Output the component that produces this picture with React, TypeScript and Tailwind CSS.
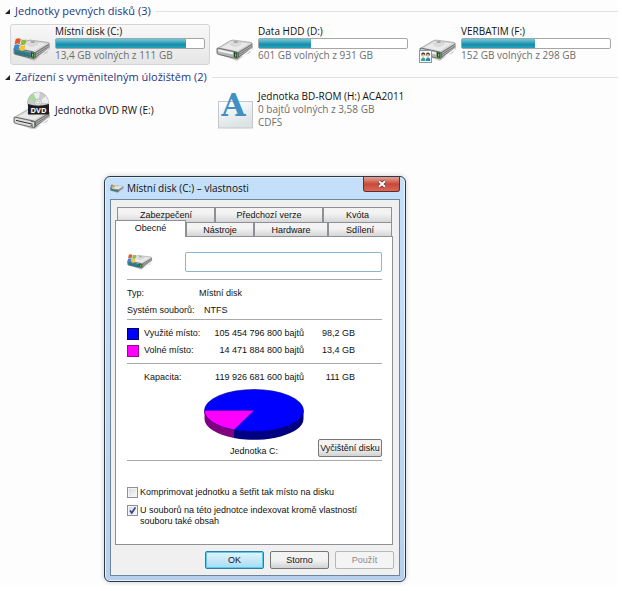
import { useState } from "react";
import type { ReactNode } from "react";
import clsx from "clsx";

type DriveKind = "system" | "plain" | "shared";

const drives: { name: string; info: string; used: number; kind: DriveKind; selected?: boolean }[] = [
  { name: "Místní disk (C:)", info: "13,4 GB volných z 111 GB", used: 88, kind: "system", selected: true },
  { name: "Data HDD (D:)", info: "601 GB volných z 931 GB", used: 35, kind: "plain" },
  { name: "VERBATIM (F:)", info: "152 GB volných z 298 GB", used: 49, kind: "shared" },
];

const backTabs = ["Zabezpečení", "Předchozí verze", "Kvóta"];
const frontTabs = ["Obecné", "Nástroje", "Hardware", "Sdílení"];

function DriveBody() {
  return (
    <g>
      <path d="M2 20 L21 27 L37 15 L37 13 L34 19 L20 25Z" fill="#9a9a9a" opacity="0.5" />
      <path d="M1.2 14.5 L14.5 6.6 Q16 6 18 6.2 L35 8.4 Q36.6 8.8 36 10 L21 19.4 L2 16Z" fill="#d4d4d4" stroke="#8b8b8b" strokeWidth="0.6" />
      <path d="M5 13.6 L16 7.4 L33 9.4 L21 17Z" fill="#e9e9e9" />
      <path d="M14 9.6 Q20 6.8 25 8.6 Q26 11 20 12.4 Q15 12.6 14 9.6Z" fill="#dadada" stroke="#c4c4c4" strokeWidth="0.4" />
      <path d="M18 7.2 L22 7.6 L21 9 L17.5 8.4Z" fill="#999" />
      <path d="M21 18.8 L36.4 9.4 L36.6 13.6 L22 24.6 L20.4 24Z" fill="#767676" />
      <path d="M23 19.4 L36 11.4 M23 21.6 L36.2 13.2" stroke="#c4c4c4" strokeWidth="0.8" />
      <path d="M1 14.6 Q1 14 2.4 14.2 L20.6 18 Q22 18.4 22 19.4 L22 23.6 Q22 25 20.4 24.6 L2.4 20.4 Q1 20 1 19Z" fill="#b4b4b4" stroke="#555" strokeWidth="0.8" />
      <path d="M2.4 15.2 L17 18.4 L17 20.6 L2.4 17.4Z" fill="#f1f1f1" />
      <path d="M17.8 18 L21.2 18.8 L21.2 24 L17.8 23.2Z" fill="#1f4a1f" />
      <path d="M19 19.4 L20.3 19.7 L20.3 22.8 L19 22.5Z" fill="#55d04c" />
    </g>
  );
}

function WindowsFlag() {
  return (
    <g>
      <path d="M1.6 14.8 L17.6 18.4 L17.6 23.6 L2.4 20 L1.6 19Z" fill="#176a78" opacity="0.85" />
      <path d="M2.6 5.2 Q5 3.4 7.8 5 L6.8 10 Q4.2 8.8 1.6 10.4Z" fill="#dd5a2c" />
      <path d="M8.6 5.2 Q11 6.6 13.6 5.2 L12.6 10.2 Q10 11.6 7.6 10.4Z" fill="#86bd48" />
      <path d="M1.4 11.2 Q4 9.6 6.6 10.9 L5.6 15.6 Q3 14.4 0.6 16Z" fill="#3c88cf" />
      <path d="M7.4 11.2 Q10 12.6 12.4 11.1 L11.4 15.9 Q9 17.4 6.4 16Z" fill="#f4c637" />
    </g>
  );
}

function DriveIcon({ kind, className }: { kind: DriveKind; className?: string }) {
  return (
    <svg viewBox="0 0 38 30" className={className} aria-hidden="true">
      <DriveBody />
      {kind === "system" && <WindowsFlag />}
      {kind === "shared" && (
        <g>
          <rect x="0.5" y="16.5" width="12" height="12" fill="#f6fbfd" stroke="#8597a5" />
          <path d="M2.4 21.4 Q2 18.4 4.2 18.4 Q6.6 18.2 6.2 22 L5.2 20.4Z" fill="#3a332b" />
          <path d="M7 21.4 Q6.8 18.4 9 18.4 Q11.4 18.4 10.8 22 L9.8 20.4Z" fill="#4b3a22" />
          <circle cx="4.2" cy="21.4" r="1.3" fill="#e9b98c" />
          <circle cx="8.8" cy="21.4" r="1.3" fill="#e9b98c" />
          <path d="M2 27 Q2 23.4 4.4 23.4 Q6.4 23.4 6.4 27Z" fill="#3f9f8b" />
          <path d="M6.8 27 Q6.8 23.4 9 23.4 Q11.4 23.4 11.4 27Z" fill="#2b86b8" />
        </g>
      )}
    </svg>
  );
}

function DvdIcon() {
  return (
    <svg viewBox="0 0 38 38" className="h-[38px] w-[38px]" aria-hidden="true">
      <g transform="translate(0 12)">
        <DriveBody />
        <path d="M2.4 15.2 L21 19.2 L21 24 L2.4 19.8Z" fill="#dedede" />
        <path d="M3 17.4 L19.6 21.2" stroke="#333" strokeWidth="1" />
        <path d="M17.6 22.4 L20 23" stroke="#333" strokeWidth="0.8" />
      </g>
      <circle cx="25" cy="11.5" r="10.5" fill="#c9cccc" stroke="#9b9f9f" strokeWidth="0.6" />
      <path d="M25 11.5 L15.4 8 Q17 4 20.4 2.4Z" fill="#a9d99b" />
      <path d="M25 11.5 L20.4 2.4 Q24 0.8 27 1.4Z" fill="#eceeee" />
      <path d="M25 11.5 L33 5 Q35.4 8 35.2 12Z" fill="#eceeee" />
      <circle cx="25" cy="11.5" r="3.6" fill="#e2e5e5" stroke="#a3a6a6" strokeWidth="0.6" />
      <circle cx="25" cy="11.5" r="1.5" fill="#fff" stroke="#999" strokeWidth="0.5" />
      <path d="M15 13 Q25 16.5 36 13 L36 23.5 L15 23.5Z" fill="#1f1f1f" />
      <text x="25.5" y="22" textAnchor="middle" fontSize="7.5" fontWeight="700" fill="#fff" fontFamily="Open Sans, sans-serif">
        DVD
      </text>
    </svg>
  );
}

function DiscImageIcon() {
  return (
    <svg viewBox="0 0 38 38" className="h-[38px] w-[38px] overflow-visible" aria-hidden="true">
      <defs>
        <linearGradient id="sheet" x1="0" y1="0" x2="0.4" y2="1">
          <stop offset="0" stopColor="#fff" />
          <stop offset="1" stopColor="#dde2e5" />
        </linearGradient>
      </defs>
      <rect x="2.5" y="10.5" width="34" height="26.5" fill="url(#sheet)" stroke="#c3c7ca" />
      <text x="17.5" y="25" textAnchor="middle" fontSize="31" fontWeight="700" fill="#4090c4" fontFamily="'DejaVu Serif', serif">
        A
      </text>
    </svg>
  );
}

function UsagePie() {
  return (
    <svg viewBox="0 0 100 52" className="h-[52px] w-[100px]" role="img" aria-label="Jednotka C:">
      <path d="M0.5 21.5 V30 A49.5 21 0 0 0 30 49 V40Z" fill="#800080" />
      <path d="M30 40 V49 A49.5 21 0 0 0 99.5 30 V21.5Z" fill="#000080" />
      <ellipse cx="50" cy="21.5" rx="49.5" ry="21" fill="#0000ff" stroke="#000080" strokeWidth="0.6" />
      <path d="M50 21.5 L0.5 21.5 A49.5 21 0 0 0 30 40.7Z" fill="#ff00ff" stroke="#4b00a0" strokeWidth="0.5" />
    </svg>
  );
}

function GroupHeader({ children }: { children: ReactNode }) {
  return (
    <h2 className="flex h-[22px] items-center gap-[5px] pl-[5px] text-[11px] whitespace-nowrap text-[#26377f]">
      <svg viewBox="0 0 5 5" className="h-[5px] w-[5px]" aria-hidden="true">
        <path d="M5 0 V5 H0Z" fill="#222" />
      </svg>
      <span>{children}</span>
      <span className="h-px flex-1 bg-[#dfe1e6]" />
    </h2>
  );
}

function Button({ children, primary, disabled }: { children: ReactNode; primary?: boolean; disabled?: boolean }) {
  return (
    <button
      type="button"
      disabled={disabled}
      className={clsx(
        "h-[18px] w-[59px] rounded-[2px] border text-center leading-[14px]",
        primary && "border-[#2c7fa3] bg-linear-to-b from-[#e4f4fb] to-[#a5dcf3] shadow-[inset_0_0_0_1px_#58cbef]",
        disabled && "border-[#b4b8ba] bg-[#f4f4f4] text-[#8b8b8b]",
        !primary && !disabled && "border-[#777] bg-linear-to-b from-[#f3f3f3] from-50% to-[#d2d2d2]",
      )}
    >
      {children}
    </button>
  );
}

function Check({ id, checked, children }: { id: string; checked?: boolean; children: ReactNode }) {
  return (
    <div className="flex items-start gap-[2px]">
      <span className="grid shrink-0">
        <input
          id={id}
          type="checkbox"
          defaultChecked={checked}
          className="peer col-start-1 row-start-1 h-[11px] w-[11px] appearance-none border border-[#8e8f8f] bg-linear-to-br from-[#d5d8dc] to-[#fafafa] shadow-[inset_0_0_0_1px_#f4f4f4]"
        />
        <svg viewBox="0 0 11 11" className="pointer-events-none invisible col-start-1 row-start-1 h-[11px] w-[11px] peer-checked:visible" aria-hidden="true">
          <path d="M3 5.4 L4.8 8 L8.4 2.4" fill="none" stroke="#30458f" strokeWidth="1.7" />
        </svg>
      </span>
      <label htmlFor={id} className="leading-[11px]">
        {children}
      </label>
    </div>
  );
}

function Rule({ className }: { className?: string }) {
  return <hr className={clsx("border-t border-[#a9a9a9]", className)} />;
}

function PropertiesWindow() {
  const [tab, setTab] = useState("Obecné");

  const tabClass = "border border-b-0 border-[#8d9094] bg-linear-to-b from-[#f3f3f3] from-40% to-[#d6d6d6] leading-[14px]";

  return (
    <section
      aria-label="Místní disk (C:) – vlastnosti"
      className="w-[302px] rounded-[6px] border border-[#2b3a47] bg-linear-to-b from-[#c4dffa] from-30% to-[#b4d0ee] px-[5px] pb-[5px] font-['Liberation_Sans',sans-serif] text-[9px] text-[#111] shadow-[inset_0_0_0_1px_#e4f1fd,0_0_5px_#00000033]"
    >
      <header className="flex h-[22px] items-center">
        <DriveIcon kind="system" className="h-[11px] w-[14px]" />
        <h1 className="ml-[3px] font-['Open_Sans',sans-serif] text-[10px]">Místní disk (C:) – vlastnosti</h1>
        <button
          type="button"
          aria-label="Zavřít"
          className="ml-auto grid h-[15px] w-[37px] place-items-center self-start rounded-b-[3px] border border-t-0 border-[#6b2a25] bg-linear-to-b from-[#e0a297] via-[#c9483a] via-50% to-[#d56a58]"
        >
          <svg viewBox="0 0 10 8" className="h-[8px] w-[10px]" aria-hidden="true">
            <path d="M2 1.2 L8 6.8 M8 1.2 L2 6.8" stroke="#5c2a2a" strokeWidth="3.2" />
            <path d="M2 1.2 L8 6.8 M8 1.2 L2 6.8" stroke="#fff" strokeWidth="1.9" />
          </svg>
        </button>
      </header>

      <div className="border border-[#6f8599] bg-[#f0f0f0] pt-[7px] pr-[6px] pb-[6px] pl-[4px]">
        <div role="tablist">
          <div className="mr-px ml-[2px] grid grid-cols-[98fr_108fr_69fr]">
            {backTabs.map((t) => (
              <button key={t} type="button" role="tab" aria-selected={tab === t} onClick={() => setTab(t)} className={clsx(tabClass, "h-[15px]")}>
                {t}
              </button>
            ))}
          </div>
          <div className="mr-px grid grid-cols-[71fr_68fr_74fr_64fr] grid-rows-[14px] items-end">
            {frontTabs.map((t) => (
              <button
                key={t}
                type="button"
                role="tab"
                aria-selected={tab === t}
                onClick={() => setTab(t)}
                className={
                  tab === t
                    ? "relative -mb-px h-[17px] border border-b-0 border-[#8d9094] bg-white pb-[2px] leading-[14px]"
                    : clsx(tabClass, "h-[14px]")
                }
              >
                {t}
              </button>
            ))}
          </div>
        </div>

        <div role="tabpanel" className="border border-[#8d9094] bg-white pt-[14px] pr-[10px] pb-[17px] pl-[11px]">
          <div className="flex items-center">
            <DriveIcon kind="system" className="h-[21px] w-[26px]" />
            <input
              type="text"
              aria-label="Název jednotky"
              className="ml-[32px] h-[20px] min-w-0 flex-1 rounded-[2px] border border-[#8fb3cc] bg-white px-1 outline-none"
            />
          </div>
          <Rule className="mt-[7px]" />

          <dl className="mt-[5px] leading-[17px]">
            <div className="flex">
              <dt className="w-[72px]">Typ:</dt>
              <dd>Místní disk</dd>
            </div>
            <div className="flex">
              <dt className="w-[77px]">Systém souborů:</dt>
              <dd>NTFS</dd>
            </div>
          </dl>
          <Rule />

          <table className="mt-[5px] w-full leading-[17px] [&_td]:p-0 [&_td]:text-right [&_th]:p-0 [&_th]:text-left [&_th]:font-normal">
            <tbody>
              <tr>
                <td className="w-[17px]">
                  <span className="block h-[12px] w-[12px] border border-[#000060] bg-[#0000ff]" />
                </td>
                <th scope="row">Využité místo:</th>
                <td className="w-[90px]">105 454 796 800 bajtů</td>
                <td className="w-[51px]">98,2 GB</td>
                <td className="w-[27px]" />
              </tr>
              <tr>
                <td>
                  <span className="block h-[12px] w-[12px] border border-[#a000a0] bg-[#ff00ff]" />
                </td>
                <th scope="row">Volné místo:</th>
                <td>14 471 884 800 bajtů</td>
                <td>13,4 GB</td>
                <td />
              </tr>
            </tbody>
            <tbody>
              <tr>
                <td colSpan={5}>
                  <Rule className="mt-[4px] mb-[5px]" />
                </td>
              </tr>
              <tr>
                <td />
                <th scope="row">Kapacita:</th>
                <td>119 926 681 600 bajtů</td>
                <td>111 GB</td>
                <td />
              </tr>
            </tbody>
          </table>

          <div className="mt-[3px] flex items-end">
            <figure className="ml-[77px] flex w-[100px] flex-col items-center">
              <UsagePie />
              <figcaption className="pt-[2px] leading-[17px]">Jednotka C:</figcaption>
            </figure>
            <button
              type="button"
              className="mb-[3px] ml-auto h-[18px] w-[64px] rounded-[2px] border border-[#777] bg-linear-to-b from-[#f3f3f3] from-50% to-[#d2d2d2] leading-[14px] whitespace-nowrap"
            >
              Vyčištění disku
            </button>
          </div>
          <Rule />

          <div className="mt-[26px] flex flex-col gap-[7px]">
            <Check id="compress">Komprimovat jednotku a šetřit tak místo na disku</Check>
            <Check id="index" checked>
              U souborů na této jednotce indexovat kromě vlastností
              <br />
              souboru také obsah
            </Check>
          </div>
        </div>

        <div className="mt-[6px] -mr-px flex justify-end gap-[6px]">
          <Button primary>OK</Button>
          <Button>Storno</Button>
          <Button disabled>Použít</Button>
        </div>
      </div>
    </section>
  );
}

export default function App() {
  return (
    <div className="min-h-screen bg-white">
      <main className="mr-1 bg-[#fdfdfd] pb-[3px] font-['Open_Sans',sans-serif] text-[10px] leading-[12px] text-[#111]">
        <GroupHeader>Jednotky pevných disků (3)</GroupHeader>
        <ul className="mt-[2px] mb-px -mr-px ml-[10px] grid grid-cols-3">
          {drives.map((d) => (
            <li
              key={d.name}
              className={clsx(
                "mr-[3px] flex h-[41px] rounded-[3px] border pl-[2px]",
                d.selected ? "border-[#d5d5d5] bg-linear-to-b from-[#f8f8f8] to-[#e6e6e6]" : "border-transparent",
              )}
            >
              <DriveIcon kind={d.kind} className="mt-[9px] h-[30px] w-[38px] shrink-0" />
              <div className="mr-[4px] ml-[4px] min-w-0 flex-1">
                <p className="whitespace-nowrap">{d.name}</p>
                <div
                  role="progressbar"
                  aria-label={d.name}
                  aria-valuenow={d.used}
                  className="mt-[1px] h-[11px] rounded-[2px] border border-[#a4a6a8] bg-white"
                >
                  <div
                    className="h-full bg-linear-to-b from-[#63c3d7] from-10% via-[#178ca8] via-60% to-[#27a5be]"
                    style={{ width: `${d.used}%` }}
                  />
                </div>
                <p className="whitespace-nowrap text-[#6d6d6d]">{d.info}</p>
              </div>
            </li>
          ))}
        </ul>

        <GroupHeader>Zařízení s vyměnitelným úložištěm (2)</GroupHeader>
        <ul className="mt-[2px] -mr-px ml-[10px] grid grid-cols-3">
          <li className="flex items-center pl-[3px]">
            <DvdIcon />
            <p className="ml-[4px] whitespace-nowrap">Jednotka DVD RW (E:)</p>
          </li>
          <li className="flex items-center pl-[3px]">
            <DiscImageIcon />
            <div className="ml-[4px] leading-[13px] whitespace-nowrap">
              <p>Jednotka BD-ROM (H:) ACA2011</p>
              <p className="text-[#6d6d6d]">0 bajtů volných z 3,58 GB</p>
              <p className="text-[#6d6d6d]">CDFS</p>
            </div>
          </li>
        </ul>

        <div className="mt-[47px] ml-[104px]">
          <PropertiesWindow />
        </div>
      </main>
    </div>
  );
}
